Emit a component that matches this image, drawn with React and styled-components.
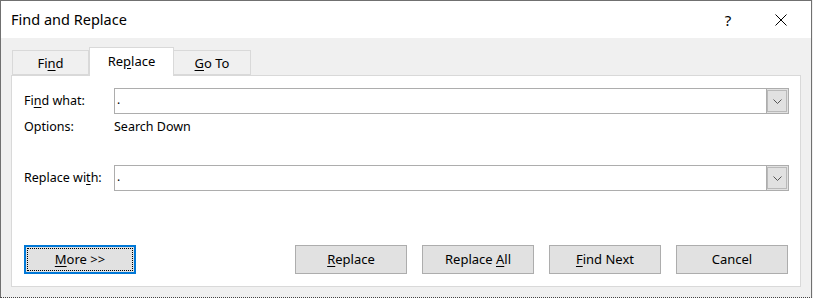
import React from 'react'
import styled, { createGlobalStyle } from 'styled-components'

const Global = createGlobalStyle`
    html, body {
        margin: 0;
        padding: 0;
        background: #f0f0f0;
    }
    * {
        box-sizing: border-box;
    }
`

const Dialog = styled.div`
    width: 812px;
    height: 298px;
    border: 1px solid #707070;
    border-bottom: 1px dotted #444;
    background: #f0f0f0;
    font-family: "Noto Sans", "Open Sans", sans-serif;
    font-size: 12px;
    color: #000;
    display: flex;
    flex-direction: column;
`

const TitleBar = styled.div`
    height: 37px;
    background: #fff;
    display: flex;
    align-items: center;
    padding-left: 10px;
`

const Title = styled.div`
    flex: 1;
    font-size: 14.5px;
    line-height: 20px;
    padding-bottom: 1px;
`

const TitleButton = styled.div`
    width: ${p => p.$w}px;
    height: 37px;
    display: flex;
    align-items: center;
    justify-content: center;
    font-size: 15px;
`

const Body = styled.div`
    padding: 9px 10px 0 10px;
`

const TabRow = styled.div`
    display: flex;
    align-items: flex-end;
    padding-left: 1px;
    height: 28px;
`

const Tab = styled.div`
    width: ${p => p.$w}px;
    height: ${p => (p.$active ? 29 : 25)}px;
    margin-bottom: ${p => (p.$active ? -1 : 0)}px;
    background: ${p => (p.$active ? '#fff' : '#f0f0f0')};
    border: 1px solid #d9d9d9;
    border-bottom: ${p => (p.$active ? 'none' : '1px solid #d9d9d9')};
    border-left: ${p => (p.$first || p.$active ? '1px solid #d9d9d9' : 'none')};
    display: flex;
    justify-content: center;
    align-items: center;
    padding-bottom: ${p => (p.$active ? 3 : 0)}px;
    font-size: 13px;
    z-index: ${p => (p.$active ? 1 : 0)};
`

const Panel = styled.div`
    background: #fff;
    border: 1px solid #d9d9d9;
    height: 212px;
    padding: 12px 11px 12px 12px;
    display: flex;
    flex-direction: column;
`

const Row = styled.div`
    display: grid;
    grid-template-columns: 90px 1fr;
    align-items: center;
    height: 26px;
    margin-top: ${p => p.$gap || 0}px;
`

const Label = styled.div`
    font-size: 12.5px;
    line-height: 16px;
`

const Field = styled.div`
    height: 26px;
    border: 1px solid #adadad;
    background: #fff;
    display: flex;
    align-items: stretch;
`

const FieldText = styled.div`
    flex: 1;
    padding-left: 2px;
    line-height: 22px;
    font-size: 12px;
`

const DropButton = styled.div`
    width: 22px;
    background: #e1e1e1;
    border-left: 1px solid #adadad;
    outline: 1px solid #b9b9b9;
    outline-offset: -2px;
    display: flex;
    align-items: center;
    justify-content: center;
`

const ButtonRow = styled.div`
    display: flex;
    align-items: center;
    margin-top: 54px;
    padding-right: 1px;
`

const Buttons = styled.div`
    margin-left: auto;
    display: flex;
    gap: 15px;
`

const Button = styled.div`
    width: 112px;
    height: 29px;
    background: #e1e1e1;
    border: ${p => (p.$focus ? '2px solid #0078d7' : '1px solid #adadad')};
    display: flex;
    align-items: center;
    justify-content: center;
    font-size: 13px;
    outline: ${p => (p.$focus ? '1px dotted #000' : 'none')};
    outline-offset: -4px;
    padding-bottom: 1px;
`

const Key = styled.span`
    text-decoration: underline;
    text-underline-offset: 2px;
`

const Chevron = () => (
    <svg width="9" height="5" viewBox="0 0 9 5">
        <path d="M0.5 0.5 L4.5 4.5 L8.5 0.5" fill="none" stroke="#555" strokeWidth="1" />
    </svg>
)

const CloseIcon = () => (
    <svg width="12" height="12" viewBox="0 0 12 12">
        <path d="M0.5 0.5 L11.5 11.5 M11.5 0.5 L0.5 11.5" stroke="#000" strokeWidth="1" />
    </svg>
)

function Combo ({ value }) {
    return (
        <Field>
            <FieldText>{value}</FieldText>
            <DropButton><Chevron /></DropButton>
        </Field>
    )
}

function App () {
    return (
        <>
            <Global />
            <Dialog>
                <TitleBar>
                    <Title>Find and Replace</Title>
                    <TitleButton $w={30}>?</TitleButton>
                    <TitleButton $w={26} />
                    <TitleButton $w={24}><CloseIcon /></TitleButton>
                    <TitleButton $w={18} />
                </TitleBar>
                <Body>
                    <TabRow>
                        <Tab $w={77} $first><span>Fi<Key>n</Key>d</span></Tab>
                        <Tab $w={85} $active><span>Re<Key>p</Key>lace</span></Tab>
                        <Tab $w={77}><span><Key>G</Key>o To</span></Tab>
                    </TabRow>
                    <Panel>
                        <Row>
                            <Label>Fi<Key>n</Key>d what:</Label>
                            <Combo value="." />
                        </Row>
                        <Row>
                            <Label>Options:</Label>
                            <Label>Search Down</Label>
                        </Row>
                        <Row $gap={26}>
                            <Label>Replace wi<Key>t</Key>h:</Label>
                            <Combo value="." />
                        </Row>
                        <ButtonRow>
                            <Button $focus><span><Key>M</Key>ore &gt;&gt;</span></Button>
                            <Buttons>
                                <Button><span><Key>R</Key>eplace</span></Button>
                                <Button><span>Replace <Key>A</Key>ll</span></Button>
                                <Button><span><Key>F</Key>ind Next</span></Button>
                                <Button>Cancel</Button>
                            </Buttons>
                        </ButtonRow>
                    </Panel>
                </Body>
            </Dialog>
        </>
    )
}

export default App
